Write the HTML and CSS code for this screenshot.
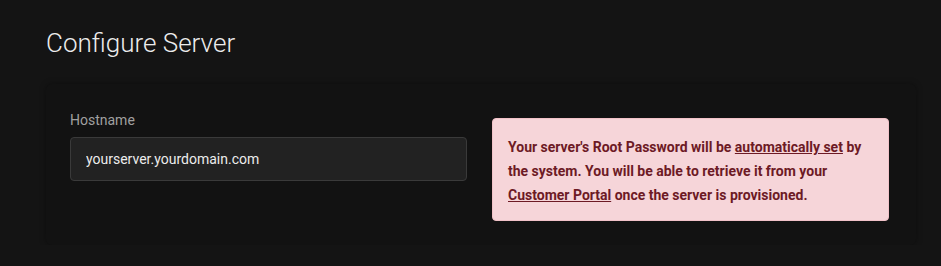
FILE: index.html
```html
<!DOCTYPE html>
<html lang="en">
<head>
    <meta charset="UTF-8">
    <meta name="viewport" content="width=device-width, initial-scale=1.0">
    <title>Configure Server</title>
    <link rel="stylesheet" href="styles.css">
</head>
<body>

<div class="page">
    <h2 class="page-title">Configure Server</h2>

    <div class="card">
        <div class="field">
            <label for="hostname">Hostname</label>
            <input type="text" id="hostname" value="yourserver.yourdomain.com">
        </div>

        <div class="alert">
            Your server's Root Password will be <a href="#">automatically set</a> by
            the system. You will be able to retrieve it from your
            <a href="#">Customer Portal</a> once the server is provisioned.
        </div>
    </div>
</div>

</body>
</html>
```

FILE: styles.css
```css
body {
    font-family: Roboto, "Liberation Sans", sans-serif;
    margin: 0;
    padding: 0;
    background-color: #141414;
    color: #e6e6e6;
}

.page {
    padding: 26px 46px 0;
}

.page-title {
    font-size: 26px;
    font-weight: 300;
    line-height: 34px;
    margin: 0 0 24px;
    color: #ececec;
}

.card {
    width: 822px;
    display: grid;
    grid-template-columns: 397px 397px;
    column-gap: 25px;
    align-items: start;
    padding: 24px;
    background-color: #121212;
    border-radius: 6px;
    box-shadow: 0 0 6px rgba(0, 0, 0, 0.35);
}

.field label {
    display: block;
    font-size: 14px;
    line-height: 24px;
    color: #a0a0a0;
    margin-bottom: 5px;
}

.field input {
    box-sizing: border-box;
    width: 100%;
    height: 44px;
    padding: 0 15px;
    font-family: inherit;
    font-size: 14px;
    color: #ececec;
    background-color: #222222;
    border: 1px solid #3a3a3a;
    border-radius: 4px;
    outline: none;
}

.alert {
    margin-top: 10px;
    padding: 16px 15px 13px;
    background-color: #f6d5d9;
    border: 1px solid #f1c2c8;
    border-radius: 4px;
    color: #6d1a25;
    font-size: 14px;
    font-weight: 700;
    line-height: 24px;
}

.alert a {
    color: #6d1a25;
    text-decoration: underline;
}
```
